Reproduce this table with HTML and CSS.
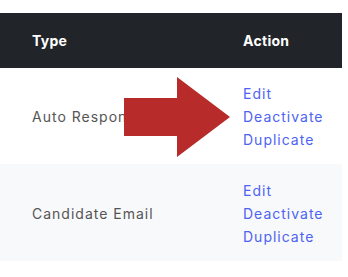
FILE: index.html
```html
<!DOCTYPE html>
<html lang="en">

<head>
  <meta charset="UTF-8">
  <meta name="viewport" content="width=device-width, initial-scale=1.0">
  <title>Templates</title>
  <link rel="stylesheet" href="styles.css">
</head>

<body>
  <div class="wrap">
    <table class="templates">
      <thead>
        <tr>
          <th class="col-type">Type</th>
          <th>Action</th>
        </tr>
      </thead>
      <tbody>
        <tr>
          <td class="col-type">Auto Responder</td>
          <td class="actions">
            <a href="#">Edit</a>
            <a href="#">Deactivate</a>
            <a href="#">Duplicate</a>
          </td>
        </tr>
        <tr class="alt">
          <td class="col-type">Candidate Email</td>
          <td class="actions">
            <a href="#">Edit</a>
            <a href="#">Deactivate</a>
            <a href="#">Duplicate</a>
          </td>
        </tr>
      </tbody>
    </table>

    <!-- callout arrow pointing at the actions -->
    <svg class="arrow" width="106" height="80" viewBox="0 0 106 80">
      <polygon points="0,21 53,21 53,0 106,40 53,80 53,59 0,59" fill="#b82b2b" />
    </svg>
  </div>
</body>

</html>
```

FILE: styles.css
```css
body {
  margin: 0;
  font-family: 'Inter', sans-serif;
  background-color: #fff;
}

.wrap {
  position: relative;
  width: 342px;
  padding-top: 13px;
}

.templates {
  width: 342px;
  border-collapse: collapse;
}

.templates th {
  background-color: #212529;
  color: #fff;
  font-size: 14px;
  font-weight: bold;
  text-align: left;
  height: 55px;
  padding: 0;
  vertical-align: middle;
  letter-spacing: 0.3px;
}

.templates td {
  font-size: 14px;
  color: #555;
  padding: 0;
  height: 96px;
  vertical-align: middle;
  letter-spacing: 1px;
}

.templates .col-type {
  width: 211px;
  padding-left: 32px;
}

.templates tr.alt td {
  background-color: #f8f9fb;
  height: 95px;
  padding-top: 2px;
}

.actions a {
  display: block;
  color: #4d63f3;
  text-decoration: none;
  line-height: 23px;
}

.arrow {
  position: absolute;
  left: 124px;
  top: 77px;
}
```
